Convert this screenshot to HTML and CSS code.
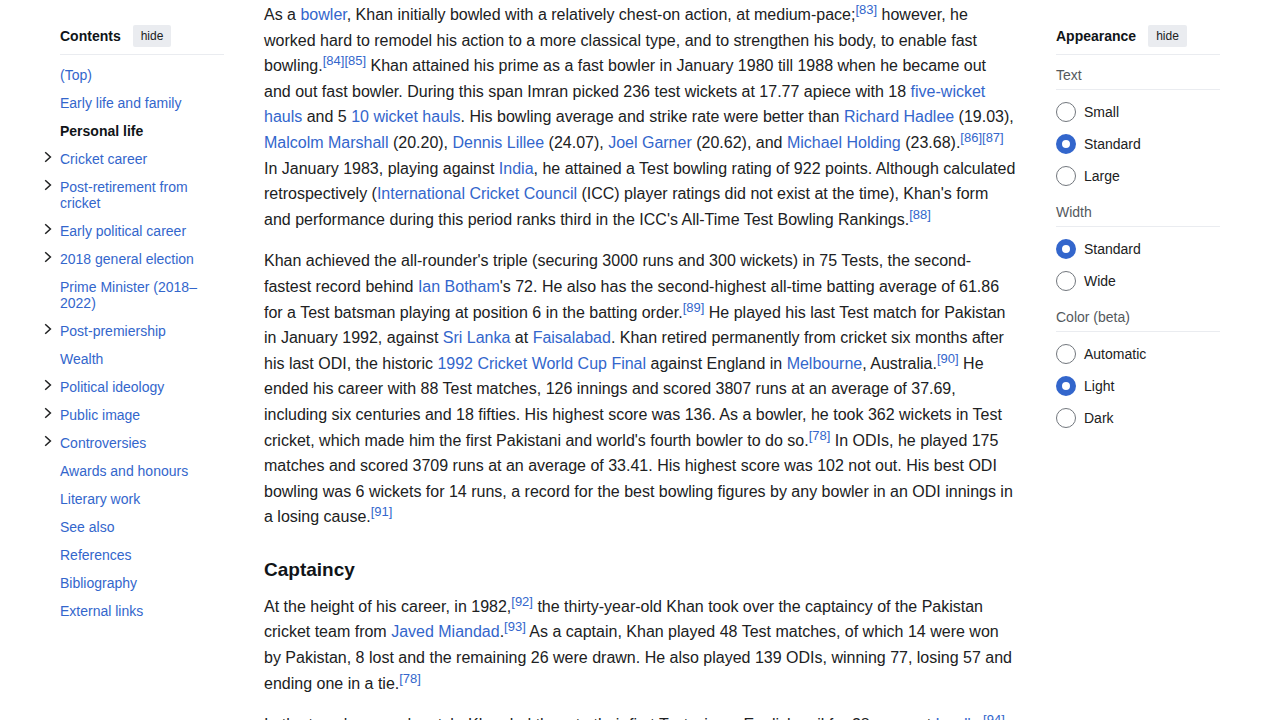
FILE: index.html
```html
<!DOCTYPE html>
<html lang="en">
<head>
<meta charset="utf-8">
<meta name="viewport" content="width=device-width, initial-scale=1">
<title>Imran Khan</title>
<link rel="stylesheet" href="styles.css">
</head>
<body>
<svg class="defs" aria-hidden="true">
  <symbol id="chevron" viewBox="0 0 8 12"><path d="M1.2 1.2 6.4 6 1.2 10.8" fill="none" stroke="#202122" stroke-width="1.5"/></symbol>
</svg>
<div class="page">
  <nav class="toc" aria-label="Contents">
    <div class="panel-header toc-header">
      <h2 class="panel-title">Contents</h2>
      <button type="button" class="hide-button">hide</button>
    </div>
    <ul class="toc-list">
      <li class="toc-item"><a class="toc-link" href="#top">(Top)</a></li>
      <li class="toc-item"><a class="toc-link" href="#early-life">Early life and family</a></li>
      <li class="toc-item"><a class="toc-link toc-active" href="#personal-life">Personal life</a></li>
      <li class="toc-item"><button type="button" class="toc-toggle" aria-label="Toggle Cricket career subsection"><svg class="chevron"><use href="#chevron"/></svg></button><a class="toc-link" href="#cricket">Cricket career</a></li>
      <li class="toc-item"><button type="button" class="toc-toggle" aria-label="Toggle Post-retirement subsection"><svg class="chevron"><use href="#chevron"/></svg></button><a class="toc-link" href="#retirement">Post-retirement from cricket</a></li>
      <li class="toc-item"><button type="button" class="toc-toggle" aria-label="Toggle Early political career subsection"><svg class="chevron"><use href="#chevron"/></svg></button><a class="toc-link" href="#early-politics">Early political career</a></li>
      <li class="toc-item"><button type="button" class="toc-toggle" aria-label="Toggle 2018 general election subsection"><svg class="chevron"><use href="#chevron"/></svg></button><a class="toc-link" href="#election">2018 general election</a></li>
      <li class="toc-item"><a class="toc-link" href="#prime-minister">Prime Minister (2018–2022)</a></li>
      <li class="toc-item"><button type="button" class="toc-toggle" aria-label="Toggle Post-premiership subsection"><svg class="chevron"><use href="#chevron"/></svg></button><a class="toc-link" href="#post-premiership">Post-premiership</a></li>
      <li class="toc-item"><a class="toc-link" href="#wealth">Wealth</a></li>
      <li class="toc-item"><button type="button" class="toc-toggle" aria-label="Toggle Political ideology subsection"><svg class="chevron"><use href="#chevron"/></svg></button><a class="toc-link" href="#ideology">Political ideology</a></li>
      <li class="toc-item"><button type="button" class="toc-toggle" aria-label="Toggle Public image subsection"><svg class="chevron"><use href="#chevron"/></svg></button><a class="toc-link" href="#image">Public image</a></li>
      <li class="toc-item"><button type="button" class="toc-toggle" aria-label="Toggle Controversies subsection"><svg class="chevron"><use href="#chevron"/></svg></button><a class="toc-link" href="#controversies">Controversies</a></li>
      <li class="toc-item"><a class="toc-link" href="#awards">Awards and honours</a></li>
      <li class="toc-item"><a class="toc-link" href="#literary">Literary work</a></li>
      <li class="toc-item"><a class="toc-link" href="#see-also">See also</a></li>
      <li class="toc-item"><a class="toc-link" href="#references">References</a></li>
      <li class="toc-item"><a class="toc-link" href="#bibliography">Bibliography</a></li>
      <li class="toc-item"><a class="toc-link" href="#external">External links</a></li>
    </ul>
  </nav>

  <main class="article">
    <p>As a <a href="#">bowler</a>, Khan initially bowled with a relatively chest-on action, at medium-pace;<sup><a href="#">[83]</a></sup> however, he worked hard to remodel his action to a more classical type, and to strengthen his body, to enable fast bowling.<sup><a href="#">[84]</a></sup><sup><a href="#">[85]</a></sup> Khan attained his prime as a fast bowler in January 1980 till 1988 when he became out and out fast bowler. During this span Imran picked 236 test wickets at 17.77 apiece with 18 <a href="#">five-wicket hauls</a> and 5 <a href="#">10 wicket hauls</a>. His bowling average and strike rate were better than <a href="#">Richard Hadlee</a> (19.03), <a href="#">Malcolm Marshall</a> (20.20), <a href="#">Dennis Lillee</a> (24.07), <a href="#">Joel Garner</a> (20.62), and <a href="#">Michael Holding</a> (23.68).<sup><a href="#">[86]</a></sup><sup><a href="#">[87]</a></sup> In January 1983, playing against <a href="#">India</a>, he attained a Test bowling rating of 922 points. Although calculated retrospectively (<a href="#">International Cricket Council</a> (ICC) player ratings did not exist at the time), Khan's form and performance during this period ranks third in the ICC's All-Time Test Bowling Rankings.<sup><a href="#">[88]</a></sup></p>
    <p>Khan achieved the all-rounder's triple (securing 3000 runs and 300 wickets) in 75 Tests, the second-fastest record behind <a href="#">Ian Botham</a>'s 72. He also has the second-highest all-time batting average of 61.86 for a Test batsman playing at position 6 in the batting order.<sup><a href="#">[89]</a></sup> He played his last Test match for Pakistan in January 1992, against <a href="#">Sri Lanka</a> at <a href="#">Faisalabad</a>. Khan retired permanently from cricket six months after his last ODI, the historic <a href="#">1992 Cricket World Cup Final</a> against England in <a href="#">Melbourne</a>, Australia.<sup><a href="#">[90]</a></sup> He ended his career with 88 Test matches, 126 innings and scored 3807 runs at an average of 37.69, including six centuries and 18 fifties. His highest score was 136. As a bowler, he took 362 wickets in Test cricket, which made him the first Pakistani and world's fourth bowler to do so.<sup><a href="#">[78]</a></sup> In ODIs, he played 175 matches and scored 3709 runs at an average of 33.41. His highest score was 102 not out. His best ODI bowling was 6 wickets for 14 runs, a record for the best bowling figures by any bowler in an ODI innings in a losing cause.<sup><a href="#">[91]</a></sup></p>
    <h3>Captaincy</h3>
    <p>At the height of his career, in 1982,<sup><a href="#">[92]</a></sup> the thirty-year-old Khan took over the captaincy of the Pakistan cricket team from <a href="#">Javed Miandad</a>.<sup><a href="#">[93]</a></sup> As a captain, Khan played 48 Test matches, of which 14 were won by Pakistan, 8 lost and the remaining 26 were drawn. He also played 139 ODIs, winning 77, losing 57 and ending one in a tie.<sup><a href="#">[78]</a></sup></p>
    <p>In the team's second match, Khan led them to their first Test win on English soil for 28 years at <a href="#">Lord's</a>.<sup><a href="#">[94]</a></sup></p>
  </main>

  <aside class="appearance" aria-label="Appearance">
    <div class="panel-header">
      <h2 class="panel-title">Appearance</h2>
      <button type="button" class="hide-button">hide</button>
    </div>
    <div class="groups">
      <div class="group" role="radiogroup" aria-labelledby="text-label">
        <h3 class="group-title" id="text-label">Text</h3>
        <div class="options">
          <label class="option"><input class="radio" type="radio" name="text">Small</label>
          <label class="option"><input class="radio" type="radio" name="text" checked>Standard</label>
          <label class="option"><input class="radio" type="radio" name="text">Large</label>
        </div>
      </div>
      <div class="group" role="radiogroup" aria-labelledby="width-label">
        <h3 class="group-title" id="width-label">Width</h3>
        <div class="options">
          <label class="option"><input class="radio" type="radio" name="width" checked>Standard</label>
          <label class="option"><input class="radio" type="radio" name="width">Wide</label>
        </div>
      </div>
      <div class="group" role="radiogroup" aria-labelledby="color-label">
        <h3 class="group-title" id="color-label">Color (beta)</h3>
        <div class="options">
          <label class="option"><input class="radio" type="radio" name="color">Automatic</label>
          <label class="option"><input class="radio" type="radio" name="color" checked>Light</label>
          <label class="option"><input class="radio" type="radio" name="color">Dark</label>
        </div>
      </div>
    </div>
  </aside>
</div>
</body>
</html>
```
FILE: styles.css
```css
* {
  box-sizing: border-box;
}

body {
  margin: 0;
  background: #fff;
  color: #202122;
  font-family: "Liberation Sans", Arial, sans-serif;
  font-size: 14px;
}

a {
  color: #3366cc;
  text-decoration: none;
}

a:hover {
  text-decoration: underline;
}

button {
  margin: 0;
  border: 0;
  font-family: inherit;
  color: inherit;
  cursor: pointer;
}

.defs {
  display: none;
}

.page {
  display: grid;
  grid-template-columns: 180px minmax(0, 1fr) 164px;
  column-gap: 40px;
  height: 100vh;
  padding: 0 60px 0 44px;
  overflow: hidden;
}

/* Side panels */

.toc,
.appearance {
  padding-top: 18px;
}

.panel-header {
  display: flex;
  align-items: center;
  gap: 12px;
  height: 37px;
  border-bottom: 1px solid #eaecf0;
}

.toc-header {
  margin-left: 16px;
}

.panel-title {
  margin: 0;
  font-size: 14px;
  line-height: 22px;
  color: #101418;
}

.hide-button {
  height: 22px;
  padding: 0 8px;
  border-radius: 2px;
  background: #eaecf0;
  font-size: 12px;
  line-height: 22px;
}

.toc-list {
  margin: 6px 0 0;
  padding: 0;
  list-style: none;
}

.toc-item {
  display: grid;
  grid-template-columns: 16px minmax(0, 1fr);
  align-items: start;
  padding: 6px 0;
  line-height: 16px;
}

.toc-link {
  grid-column: 2;
}

.toc-active {
  color: #101418;
  font-weight: bold;
}

.toc-toggle {
  display: flex;
  grid-row: 1;
  padding: 0;
  background: none;
}

.chevron {
  width: 8px;
  height: 12px;
}

/* Article text */

.article {
  padding-top: 2px;
  font-size: 16px;
  line-height: 1.6;
}

.article p {
  margin: 0 0 16px;
}

.article h3 {
  margin: 25px 0 9px;
  font-size: 19px;
  line-height: 30px;
  color: #101418;
}

.article sup {
  font-size: 13px;
  line-height: 1;
}

/* Appearance options */

.groups {
  display: flex;
  flex-direction: column;
  gap: 16px;
  padding-top: 10px;
}

.group-title {
  margin: 0 0 12px;
  padding-bottom: 4px;
  border-bottom: 1px solid #eaecf0;
  font-size: 14px;
  font-weight: normal;
  line-height: 20px;
  color: #54595d;
}

.options {
  display: flex;
  flex-direction: column;
  gap: 12px;
}

.option {
  display: flex;
  align-items: center;
  gap: 8px;
  line-height: 20px;
}

.radio {
  appearance: none;
  width: 20px;
  height: 20px;
  margin: 0;
  border: 1px solid #72777d;
  border-radius: 50%;
  background: #fff;
}

.radio:checked {
  border: 6px solid #3366cc;
}
```
